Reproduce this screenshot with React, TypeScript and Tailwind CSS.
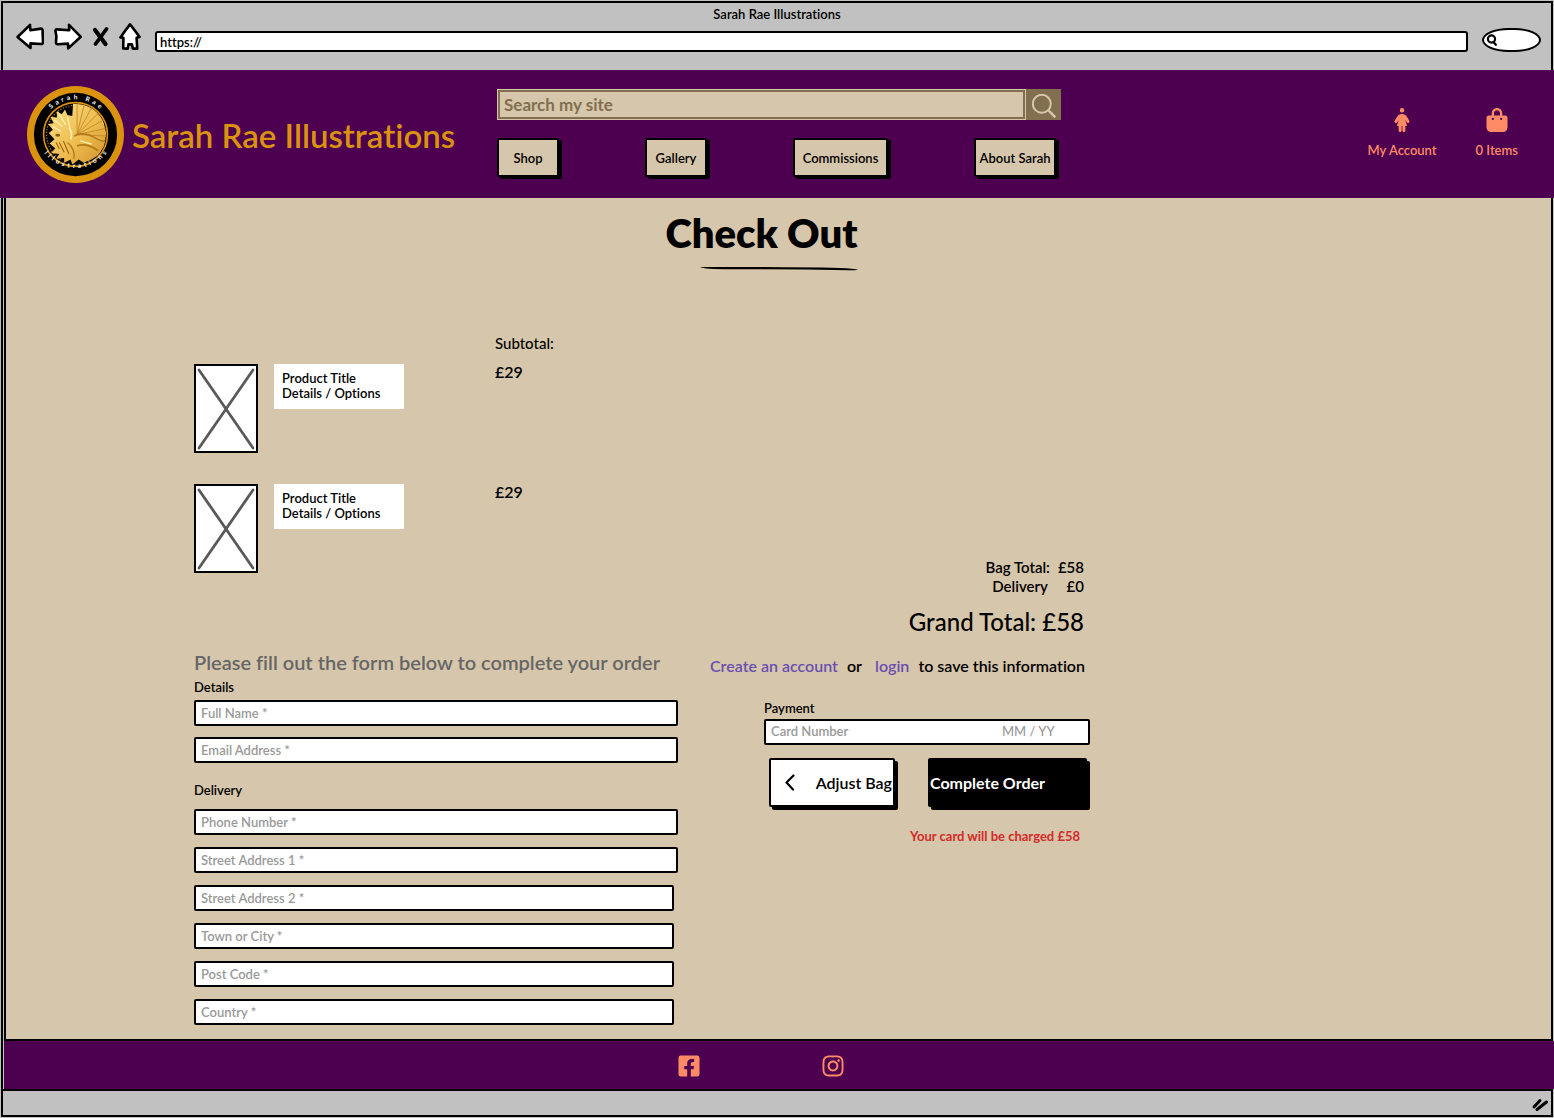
import React, { useId } from "react";
import { FaBagShopping, FaPersonDress } from "react-icons/fa6";
import { FaFacebookSquare, FaInstagram } from "react-icons/fa";

const NAV_ITEMS = [
  { label: "Shop", width: "w-[62px]" },
  { label: "Gallery", width: "w-[62px]" },
  { label: "Commissions", width: "w-[95px]" },
  { label: "About Sarah", width: "w-[82px]" },
];

const PRODUCTS = [
  { id: 1, title: "Product Title", details: "Details / Options", price: "£29" },
  { id: 2, title: "Product Title", details: "Details / Options", price: "£29" },
];

const DETAILS_FIELDS = ["Full Name *", "Email Address *"];
const ADDRESS_FIELDS = [
  { label: "Phone Number *", width: "w-full" },
  { label: "Street Address 1 *", width: "w-full" },
  { label: "Street Address 2 *", width: "w-[480px]" },
  { label: "Town or City *", width: "w-[480px]" },
  { label: "Post Code *", width: "w-[480px]" },
  { label: "Country *", width: "w-[480px]" },
];

const spread = (text: string) => text.split("").join("\u00a0\u00a0");

function Logo() {
  const id = useId();
  const rays = [
    [62, 18], [72, 18], [82, 23], [91, 31], [97, 41], [100, 52], [100, 62],
  ];
  return (
    <svg viewBox="0 0 120 120" className="size-[97px] shrink-0" aria-hidden="true">
      <defs>
        <path id={`${id}t`} d="M 16.5 60 A 43.5 43.5 0 0 1 103.5 60" />
        <path id={`${id}b`} d="M 10.5 52 A 49.5 49.5 0 1 0 109.5 52" />
        <clipPath id={`${id}c`}>
          <circle cx="60" cy="60" r="38" />
        </clipPath>
        <linearGradient id={`${id}g`} x1="0" y1="0" x2="1" y2="1">
          <stop offset="0" stopColor="#f8de84" />
          <stop offset="0.55" stopColor="#eebd50" />
          <stop offset="1" stopColor="#d0922a" />
        </linearGradient>
      </defs>
      <circle cx="60" cy="60" r="60" fill="#db930f" />
      <circle cx="60" cy="60" r="51.5" fill="#000" />
      <circle cx="60" cy="60" r="39.5" fill="none" stroke="#db930f" strokeWidth="2" />
      <path d="M56 24.2 A36 36 0 0 0 42 91" fill="none" stroke="#b57b14" strokeWidth="1.5" strokeDasharray="1.5 2" />
      <g clipPath={`url(#${id}c)`}>
        <path
          d="M57 22 L70 23 L84 29 L94 41 L98 58 L96 74 L88 86 L78 92 L70 95 L64 91 L56 97 L54 91 L46 95 L46 89 L36 90 L40 84 L30 83 L35 77 L28 71 L34 66 L27 58 L32 54 L26 47 L33 46 L29 38 L37 39 L37 31 L43 35 L47 29 L50 36 L56 37 Z"
          fill={`url(#${id}g)`}
        />
        {rays.map(([x, y]) => (
          <path key={`${x}-${y}`} d={`M62 60 L${x} ${y}`} stroke="#bd8424" strokeWidth="1" fill="none" />
        ))}
        <path d="M58 62 Q70 56 82 63 T98 68" stroke="#b47a1b" strokeWidth="2" fill="none" />
        <path d="M62 74 Q74 70 88 80" stroke="#b47a1b" strokeWidth="2.4" fill="none" />
        <path d="M50 70 Q60 78 58 90" stroke="#b47a1b" strokeWidth="1.6" fill="none" />
        <path d="M34 42 L44 50 M40 35 L48 48 M32 50 L42 56 M50 38 L53 52 M66 68 L80 72" stroke="#fff0b0" strokeWidth="1.6" />
        <path d="M40 70 L46 82 M45 68 L52 84 M36 70 L40 78" stroke="#9c6412" strokeWidth="1.4" />
        <ellipse cx="38" cy="61" rx="3" ry="1.8" fill="#8a5a10" />
        <path d="M52 52 Q57 58 54 66" stroke="#fff0b0" strokeWidth="2" fill="none" />
      </g>
      <text fill="#fff" fontSize="8" fontWeight="700">
        <textPath href={`#${id}t`} startOffset="50%" textAnchor="middle">
          {spread("Sarah Rae")}
        </textPath>
      </text>
      <text fill="#fff" fontSize="8" fontWeight="700">
        <textPath href={`#${id}b`} startOffset="50%" textAnchor="middle">
          {spread("Illustrations")}
        </textPath>
      </text>
    </svg>
  );
}

function BrowserBar() {
  const outline = {
    fill: "#fff",
    stroke: "#000",
    strokeWidth: 2.6,
    strokeLinejoin: "round" as const,
  };
  return (
    <div className="mx-px mt-px border-x-2 border-t-2 border-black pt-[3px] pb-[18px]">
      <p className="text-center text-[13px] leading-4">Sarah Rae Illustrations</p>
      <div className="flex h-[30px] items-end gap-3.5 pr-2.5 pl-[13px]">
        <div className="flex items-center gap-2.5 pb-0.5">
          <button type="button" aria-label="Back">
            <svg viewBox="0 0 28 27" className="h-[27px] w-7" {...outline}>
              <path d="M1.5 14 L14 2 L14.4 7.2 L25 5.6 Q27.2 5.6 26.6 10 L27 18 Q27 21.4 25 21 L14.5 20.4 L14.5 25 Z" />
            </svg>
          </button>
          <button type="button" aria-label="Forward">
            <svg viewBox="0 0 28 27" className="h-[27px] w-7" {...outline}>
              <path d="M26.8 13.8 L15 1.8 L15.2 7.2 L3.2 6.4 Q1 6.4 1.6 9 L2.4 13 L2 19.4 Q2 21.4 4 21.2 L14 20.6 L14.2 25.4 Z" />
            </svg>
          </button>
          <button type="button" aria-label="Stop">
            <svg viewBox="0 0 17 20" className="h-5 w-[17px]" stroke="#000" strokeLinecap="round">
              <path d="M3 3 L13.5 17" strokeWidth="4.2" />
              <path d="M14.5 2 L3.5 17" strokeWidth="3.8" />
            </svg>
          </button>
          <button type="button" aria-label="Home">
            <svg viewBox="0 0 22 27" className="h-[27px] w-[22px]" {...outline}>
              <path d="M11 1.4 Q14 5 20.6 14 L17.6 14.8 L18.2 25.6 L13.8 25.6 L13 21.4 L9.4 21.4 L8.8 25.6 L4.2 25.4 L4.4 14.8 L1.4 14.4 Q6 8 11 1.4 Z" />
            </svg>
          </button>
        </div>
        <input
          aria-label="Address"
          defaultValue="https://"
          className="h-[21px] min-w-0 flex-1 rounded-[3px] border-2 border-black bg-white px-[3px] text-[13px]"
        />
        <div className="flex h-6 w-[59px] items-center rounded-[45%/50%] border-2 border-black bg-white pl-[2px]">
          <svg viewBox="0 0 12 12" className="size-3 shrink-0" fill="none" stroke="#000" strokeWidth="2.2" strokeLinecap="round" aria-hidden="true">
            <circle cx="5.5" cy="5" r="3.6" />
            <path d="M7.5 8 L9.8 10.8" />
          </svg>
          <input aria-label="Search the web" className="w-8 bg-transparent text-xs" />
        </div>
      </div>
    </div>
  );
}

function SiteHeader() {
  return (
    <header className="flex h-32 items-center bg-[#4d0050] pr-9 pl-[27px]">
      <a href="#home" className="flex w-[470px] shrink-0 items-center gap-2 text-[33px] leading-10 text-[#db930f]">
        <Logo />
        <span className="pt-0.5 whitespace-nowrap">Sarah Rae Illustrations</span>
      </a>
      <div className="flex w-[564px] shrink-0 flex-col gap-[18px] pb-0.5">
        <form className="flex h-[31px] bg-[#d6c6ab]" role="search">
          <input
            type="search"
            aria-label="Search my site"
            placeholder="Search my site"
            className="m-px min-w-0 flex-1 border-2 border-[#826f4f] px-1 text-[17px] font-bold placeholder:text-[#826f4f]"
          />
          <button type="button" aria-label="Search" className="flex w-[35px] items-center justify-center bg-[#826f4f] pt-0.5">
            <svg viewBox="0 0 24 24" className="size-6" fill="none" stroke="#d6c6ab" strokeWidth="2" aria-hidden="true">
              <circle cx="9.8" cy="9.8" r="9" />
              <path d="M16.2 16.2 L23.3 23.3" strokeWidth="2.6" />
            </svg>
          </button>
        </form>
        <nav className="flex justify-between pr-[5px]">
          {NAV_ITEMS.map((item) => (
            <button
              key={item.label}
              type="button"
              className={`${item.width} h-[39px] rounded-[2px] border-2 border-black bg-[#d6c6ab] pt-0.5 text-[13px] whitespace-nowrap shadow-[3px_2px_0_#000]`}
            >
              {item.label}
            </button>
          ))}
        </nav>
      </div>
      <div className="ml-auto flex gap-[39px] pb-0.5 text-[13px] leading-4 text-[#ff8b66]">
        <a href="#account" className="flex flex-col items-center gap-2.5">
          <FaPersonDress className="size-6" />
          My Account
        </a>
        <a href="#bag" className="flex flex-col items-center gap-2.5">
          <FaBagShopping className="size-6" />
          0 Items
        </a>
      </div>
    </header>
  );
}

function TextField({ label, width = "w-full" }: { label: string; width?: string }) {
  return (
    <input
      type="text"
      aria-label={label}
      placeholder={label}
      className={`${width} h-[26px] rounded-[2px] border-2 border-black bg-white px-[5px] text-[13px] placeholder:text-[#999]`}
    />
  );
}

function ProductImage() {
  return (
    <svg viewBox="0 0 64 89" className="h-[89px] w-16 shrink-0" role="img" aria-label="Product image">
      <rect x="1" y="1" width="62" height="87" fill="#fff" stroke="#000" strokeWidth="2" />
      <path d="M5 6 L59 84 M59 6 L5 84" stroke="#595959" strokeWidth="2.8" strokeLinecap="round" />
    </svg>
  );
}

function OrderItems() {
  return (
    <table className="w-full table-fixed text-left">
      <thead>
        <tr className="h-8 align-top">
          <td className="w-[301px] p-0" />
          <th scope="col" className="p-0 text-[15px] leading-[22px] font-medium">Subtotal:</th>
        </tr>
      </thead>
      <tbody>
        {PRODUCTS.map((product) => (
          <tr key={product.id} className="h-[120px] align-top">
            <td className="p-0">
              <div className="flex items-start gap-4">
                <ProductImage />
                <div className="w-[130px] bg-white px-2 pt-[7px] pb-2 text-[13px] leading-[15px]">
                  <p>{product.title}</p>
                  <p>{product.details}</p>
                </div>
              </div>
            </td>
            <td className="p-0 text-base leading-[15px]">{product.price}</td>
          </tr>
        ))}
      </tbody>
    </table>
  );
}

function OrderSummary() {
  return (
    <section className="w-[380px] pt-[226px]">
      <div className="flex flex-col items-end pr-1.5">
        <dl className="grid grid-cols-[auto_auto] gap-x-2 text-right text-[15px] leading-[19px]">
          <dt>Bag Total:</dt>
          <dd>£58</dd>
          <dt className="pr-0.5">Delivery</dt>
          <dd>£0</dd>
        </dl>
        <p className="mt-2.5 text-2xl leading-8 font-medium">Grand Total: £58</p>
      </div>
      <p className="mt-[18px] flex justify-between pr-[5px] text-base leading-5 whitespace-nowrap">
        <a href="#register" className="text-[#6a4fb0]">Create an account</a>
        <span>or</span>
        <a href="#login" className="pl-1 text-[#6a4fb0]">login</a>
        <span>to save this information</span>
      </p>
      <div className="mt-6 pl-[54px]">
        <label htmlFor="card-number" className="block text-[13px] leading-4">Payment</label>
        <div className="mt-[3px] flex h-[26px] rounded-[2px] border-2 border-black bg-white pl-[5px] text-[13px]">
          <input id="card-number" placeholder="Card Number" className="min-w-0 flex-1 placeholder:text-[#999]" />
          <input aria-label="Expiry date" placeholder="MM / YY" className="w-[86px] font-medium placeholder:text-[#999]" />
        </div>
        <div className="mt-[13px] flex h-[49px] gap-[33px] pr-[3px] pl-[5px] text-base">
          <button
            type="button"
            className="flex w-[126px] items-center justify-between rounded-[2px] border-2 border-black bg-white pr-px pl-3.5 whitespace-nowrap shadow-[3px_3px_0_#000]"
          >
            <svg viewBox="0 0 10 17" className="h-[17px] w-2.5" fill="none" stroke="#000" strokeWidth="2.2" strokeLinecap="round" strokeLinejoin="round" aria-hidden="true">
              <path d="M8.5 1.5 L1.5 8.5 L8 15.5" />
            </svg>
            Adjust Bag
          </button>
          <button type="submit" className="flex-1 rounded-[2px] bg-black pl-0.5 text-left font-bold text-white shadow-[3px_3px_0_#000]">
            Complete Order
          </button>
        </div>
        <p className="mt-[21px] pr-2.5 text-right text-[13px] leading-4 font-bold text-[#d42a2a]">
          Your card will be charged £58
        </p>
      </div>
    </section>
  );
}

export default function App() {
  return (
    <div className="flex min-h-screen flex-col bg-[#c1c1c1] font-[Lato,sans-serif] font-semibold text-black [font-variant-ligatures:none]">
      <BrowserBar />
      <SiteHeader />
      <div className="mx-px mb-px flex flex-1 flex-col border-x-2 border-b-2 border-black">
        <main className="ml-px flex-1 border-b-2 border-l-2 border-black bg-[#d6c6ab]">
          <h1 className="pt-[11px] pr-[34px] text-center text-[40px] leading-[48px] font-extrabold">Check Out</h1>
          <svg viewBox="0 0 160 6" className="mx-auto mt-[9px] h-1.5 w-40" aria-hidden="true">
            <path d="M1 1.2 Q4 0.8 12 1 Q90 0.8 140 2 Q156 2.4 159 3.8 Q158 4.4 150 4.2 Q90 3.4 30 3.2 Q6 3 1 1.2 Z" />
          </svg>
          <form className="mt-[60px] flex items-start gap-8 pl-[188px]">
            <div className="w-[484px]">
              <OrderItems />
              <h2 className="mt-[46px] text-xl leading-6 whitespace-nowrap text-[#666]">
                Please fill out the form below to complete your order
              </h2>
              <fieldset className="mt-[5px]">
                <legend className="text-[13px] leading-4">Details</legend>
                <div className="mt-[5px] flex flex-col gap-[11px]">
                  {DETAILS_FIELDS.map((label) => (
                    <TextField key={label} label={label} />
                  ))}
                </div>
              </fieldset>
              <fieldset className="mt-[19px]">
                <legend className="text-[13px] leading-4">Delivery</legend>
                <div className="mt-[11px] flex flex-col gap-3">
                  {ADDRESS_FIELDS.map((field) => (
                    <TextField key={field.label} label={field.label} width={field.width} />
                  ))}
                </div>
              </fieldset>
            </div>
            <OrderSummary />
          </form>
        </main>
        <footer className="relative -mr-[3px] ml-px flex h-12 items-center justify-center gap-[120px] bg-[#4d0050] pt-0.5 pr-9 text-[#ff8b66]">
          <a href="#facebook" aria-label="Facebook">
            <FaFacebookSquare className="size-6" />
          </a>
          <a href="#instagram" aria-label="Instagram">
            <FaInstagram className="size-6" />
          </a>
        </footer>
        <div className="flex h-[26px] items-center justify-end border-t-2 border-black pt-1 pr-0.5">
          <svg viewBox="0 0 18 14" className="h-3.5 w-[18px]" stroke="#000" strokeWidth="3" strokeLinecap="round" aria-hidden="true">
            <path d="M3 9 L9 2.5 M6 11.5 L15.5 4" />
          </svg>
        </div>
      </div>
    </div>
  );
}
